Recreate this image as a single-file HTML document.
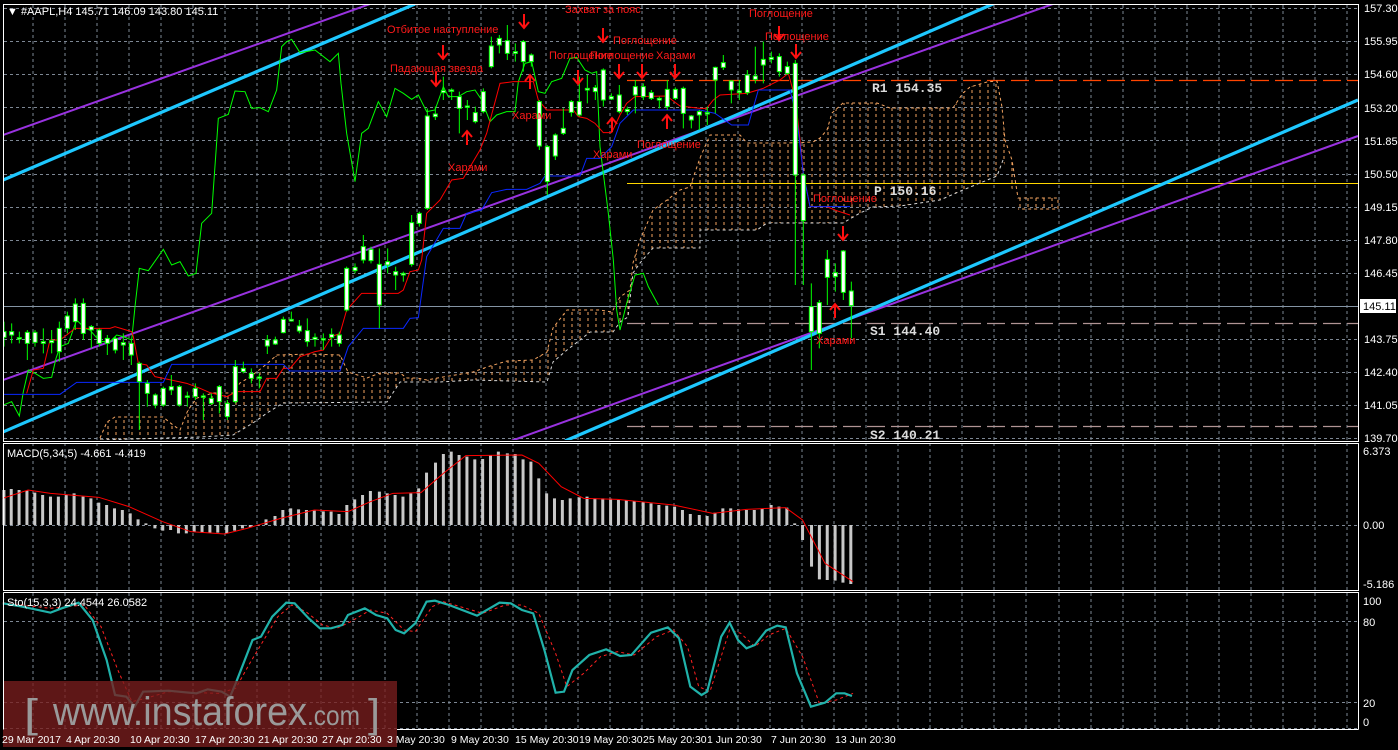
<!DOCTYPE html>
<html><head><meta charset="utf-8"><style>
html,body{margin:0;padding:0;background:#000;width:1398px;height:750px;overflow:hidden}
svg{display:block}
text{font-family:"Liberation Sans",sans-serif}
text.mono{font-family:"Liberation Mono",monospace;font-weight:bold}
</style></head><body>
<svg width="1398" height="750" viewBox="0 0 1398 750" xmlns="http://www.w3.org/2000/svg">
<defs>
<pattern id="hatch" width="8" height="6" patternUnits="userSpaceOnUse"><line x1="4" y1="0" x2="4" y2="3" stroke="#f4a460" stroke-width="1"/></pattern>
<clipPath id="mainclip"><rect x="4" y="5" width="1354" height="435"/></clipPath>
</defs>
<rect width="1398" height="750" fill="#000"/>
<g stroke="#7d8794" stroke-width="1" stroke-dasharray="3,3" fill="none">
<path d="M33 5V728M65 5V728M97 5V728M129 5V728M161 5V728M193 5V728M225 5V728M257 5V728M289 5V728M321 5V728M353 5V728M385 5V728M417 5V728M449 5V728M481 5V728M513 5V728M546 5V728M578 5V728M610 5V728M642 5V728M674 5V728M706 5V728M738 5V728M770 5V728M802 5V728M834 5V728M866 5V728M898 5V728M930 5V728M962 5V728M994 5V728M1026 5V728M1059 5V728M1091 5V728M1123 5V728M1155 5V728M1187 5V728M1219 5V728M1251 5V728M1283 5V728M1315 5V728M1347 5V728"/>
<path d="M4 8.5H1358M4 41.5H1358M4 74.5H1358M4 107.5H1358M4 140.5H1358M4 174.5H1358M4 207.5H1358M4 240.5H1358M4 273.5H1358M4 339.5H1358M4 372.5H1358M4 405.5H1358M4 438.5H1358M4 525.5H1358M4 621.5H1358M4 702.5H1358M4 728.5H1358"/>
</g>
<g clip-path="url(#mainclip)">
<line x1="627" y1="80.5" x2="1358" y2="80.5" stroke="#ff4500" stroke-width="1.3" stroke-dasharray="18,6"/>
<line x1="627" y1="183.5" x2="1358" y2="183.5" stroke="#ffd700" stroke-width="1"/>
<line x1="627" y1="323.5" x2="1358" y2="323.5" stroke="#b09494" stroke-width="1.3" stroke-dasharray="18,6"/>
<line x1="627" y1="426.5" x2="1358" y2="426.5" stroke="#b09494" stroke-width="1.3" stroke-dasharray="18,6"/>
<line x1="4" y1="306.5" x2="1358" y2="306.5" stroke="#8494a4" stroke-width="1"/>
<polygon fill="url(#hatch)" stroke="none" points="100,438 107,422 115,417 163,417 173,425 180,430 188,410 197,398 213,393 233,393 240,383 250,377 263,367 277,355 310,354 340,355 348,372 367,378 380,373 400,373 407,378 417,378 427,380 443,377 473,372 487,367 507,361 533,360 547,352 553,328 567,310 600,310 612,312 620,297 630,290 633,263 640,240 653,210 667,200 680,190 690,187 700,158 710,135 740,135 747,143 787,143 813,142 820,138 827,130 832,113 843,103 877,103 890,108 953,108 963,93 970,87 987,82 997,81 1002,107 1005,140 1012,160 1018,198 1058,198 1058,209 1018,209 1003,160 997,176 963,190 940,200 900,206 873,207 860,213 843,223 767,223 757,230 700,230 700,248 653,248 640,263 633,273 628,317 620,322 613,332 590,332 580,340 567,350 553,362 547,382 473,380 440,382 400,382 387,402 283,403 267,413 253,423 233,435 200,437 100,440"/>
<polyline fill="none" stroke="#f4a460" stroke-width="1" stroke-dasharray="3,3" points="100,438 107,422 115,417 163,417 173,425 180,430 188,410 197,398 213,393 233,393 240,383 250,377 263,367 277,355 310,354 340,355 348,372 367,378 380,373 400,373 407,378 417,378 427,380 443,377 473,372 487,367 507,361 533,360 547,352 553,328 567,310 600,310 612,312 620,297 630,290 633,263 640,240 653,210 667,200 680,190 690,187 700,158 710,135 740,135 747,143 787,143 813,142 820,138 827,130 832,113 843,103 877,103 890,108 953,108 963,93 970,87 987,82 997,81 1002,107 1005,140 1012,160 1018,198 1058,198 1058,209 1018,209"/>
<polyline fill="none" stroke="#d8d8d8" stroke-width="1" stroke-dasharray="3,3" points="1003,160 997,176 963,190 940,200 900,206 873,207 860,213 843,223 767,223 757,230 700,230 700,248 653,248 640,263 633,273 628,317 620,322 613,332 590,332 580,340 567,350 553,362 547,382 473,380 440,382 400,382 387,402 283,403 267,413 253,423 233,435 200,437 100,440"/>
<g stroke-linecap="butt">
<line x1="3" y1="135" x2="370" y2="4" stroke="#9932e0" stroke-width="2"/>
<line x1="3" y1="380" x2="1053" y2="4" stroke="#9932e0" stroke-width="2"/>
<line x1="511" y1="441" x2="1358" y2="136" stroke="#9932e0" stroke-width="2"/>
<line x1="3" y1="180" x2="415" y2="4" stroke="#1ec8ff" stroke-width="3.2"/>
<line x1="3" y1="432" x2="993" y2="4" stroke="#1ec8ff" stroke-width="3.2"/>
<line x1="565" y1="441" x2="1358" y2="100" stroke="#1ec8ff" stroke-width="3.2"/>
</g>
<g transform="scale(0.33333)" fill="none" stroke="#00ff00" stroke-width="1">
<polyline vector-effect="non-scaling-stroke" points="10,1215 35,1205 58,1248 70,1175 85,1110 105,1120 130,1135 155,1132 168,1075 180,1040 205,1030 230,960 255,985 270,990 300,1025 330,1025 350,1005 370,1010 395,1020 405,920 418,805 445,812 490,748 515,795 540,785 565,828 588,820 605,670 635,640 655,355 685,343 705,273 735,275 755,325 780,323 805,335 830,270 845,140 860,125 875,118 900,158 945,150 945,150 990,185 1015,160 1023,250 1040,400 1065,545 1085,400 1105,385 1135,305 1160,350 1185,265 1210,280 1235,298 1255,285 1280,335 1305,330 1330,260 1345,290 1375,290 1400,275 1425,270 1445,300 1470,365 1490,345 1520,335 1545,335 1555,245 1575,190 1595,185 1615,275 1635,280 1655,245 1685,235 1710,175 1730,172 1755,210 1775,220 1790,215 1800,440 1825,640 1840,780 1850,930 1860,990 1880,910 1905,825 1930,820 1945,860 1975,915"/>
<polyline vector-effect="non-scaling-stroke" stroke="#ff0000" points="80,1180 100,1110 130,1105 150,1020 180,1020 200,1005 225,985 330,985 345,980 395,995 400,1010 415,1090 440,1095 465,1130 490,1135 560,1150 600,1165 630,1178 680,1190 710,1175 780,1175 800,1135 830,1135 850,1105 870,1105 900,1070 945,1055 970,1050 995,1010 1020,1000 1040,930 1085,880 1195,880 1210,870 1230,815 1255,810 1265,780 1280,640 1320,600 1355,540 1390,535 1440,450 1460,400 1500,250 1540,245 1600,245 1615,300 1640,330 1720,330 1735,350 1760,355 1785,370 1810,398 1835,398 1860,345 1880,310 1905,290 2000,288 2040,318 2100,325 2120,325 2140,300 2160,285 2240,280 2290,265 2340,240 2365,220 2380,275 2390,330 2400,420 2410,520 2430,620 2480,620 2510,632 2550,645"/>
<polyline vector-effect="non-scaling-stroke" stroke="#0a28ff" points="10,1183 180,1183 230,1147 490,1147 515,1093 850,1093 870,1113 1020,1113 1045,1040 1090,985 1210,985 1230,955 1255,953 1280,770 1330,685 1380,685 1400,640 1445,630 1475,578 1520,568 1580,568 1620,550 1635,528 1740,528 1760,475 1800,475 1835,440 1860,370 1900,330 2100,330 2145,340 2195,375 2245,375 2275,270 2370,270 2390,350 2410,520 2430,620 2550,620"/>
</g>
<g transform="scale(0.33333)">
<path fill="none" stroke="#00ff00" stroke-width="1" vector-effect="non-scaling-stroke" d="M12 965V1040M35 970V1030M58 995V1030M82 990V1080M105 990V1040M130 985V1060M155 990V1060M178 965V1085M202 935V1000M226 895V990M250 895V1020M274 975V1045M298 985V1040M322 1005V1065M346 1010V1060M370 1000V1080M394 1020V1095M418 1085V1290M442 1140V1220M466 1180V1225M490 1160V1220M514 1125V1185M538 1155V1220M562 1175V1220M586 1150V1200M610 1180V1260M634 1180V1215M658 1155V1240M682 1200V1260M706 1080V1210M730 1085V1120M754 1105V1150M778 1120V1165M802 1005V1062M826 1010V1035M850 950V1000M874 935V965M898 960V1000M922 955V1040
M945 1000V1040M970 1000V1050M995 985V1040M1018 995V1040M1040 800V935M1065 790V820M1090 705V790M1113 740V790M1138 745V985M1163 745V820M1187 800V870M1210 815V845M1235 645V800M1258 635V680M1282 325V630M1306 320V360M1330 230V300M1355 265V300M1378 275V400M1402 300V360M1426 320V370M1450 265V340M1474 110V205M1498 105V160M1522 75V180M1546 130V185M1570 120V215M1594 160V200M1618 300V450M1642 435V585M1666 400V480M1690 325V405M1714 300V350M1738 230V350M1762 225V310M1786 255V300M1810 205V320M1834 280V300M1858 255V340M1882 320V345M1906 240V340M1930 250V300M1954 270V300M1978 290V325M2002 240V330M2026 262V300M2050 260V385M2074 345V385M2098 330V390
M2122 320V375M2146 200V340M2170 165V210M2194 240V310M2218 240V300M2242 210V285M2266 140V250M2290 125V250M2314 155V190M2338 160V230M2362 185V225M2386 180V855M2410 520V855M2434 850V1110M2458 900V1045M2482 750V915M2506 790V875M2530 750V900M2554 845V1015"/>
<g fill="#fff" stroke="#00ff00" stroke-width="1">
<rect vector-effect="non-scaling-stroke" x="6" y="995" width="12" height="17"/><rect vector-effect="non-scaling-stroke" x="29" y="995" width="12" height="10"/><rect vector-effect="non-scaling-stroke" x="52" y="1013" width="12" height="4"/><rect vector-effect="non-scaling-stroke" x="76" y="997" width="12" height="33"/><rect vector-effect="non-scaling-stroke" x="99" y="997" width="12" height="30"/><rect vector-effect="non-scaling-stroke" x="124" y="1025" width="12" height="5"/><rect vector-effect="non-scaling-stroke" x="149" y="1022" width="12" height="6"/><rect vector-effect="non-scaling-stroke" x="172" y="985" width="12" height="70"/><rect vector-effect="non-scaling-stroke" x="196" y="948" width="12" height="37"/><rect vector-effect="non-scaling-stroke" x="220" y="912" width="12" height="53"/><rect vector-effect="non-scaling-stroke" x="244" y="910" width="12" height="90"/><rect vector-effect="non-scaling-stroke" x="268" y="980" width="12" height="10"/><rect vector-effect="non-scaling-stroke" x="292" y="990" width="12" height="40"/><rect vector-effect="non-scaling-stroke" x="316" y="1015" width="12" height="15"/><rect vector-effect="non-scaling-stroke" x="340" y="1015" width="12" height="35"/><rect vector-effect="non-scaling-stroke" x="364" y="1028" width="12" height="7"/><rect vector-effect="non-scaling-stroke" x="388" y="1030" width="12" height="35"/><rect vector-effect="non-scaling-stroke" x="412" y="1090" width="12" height="55"/><rect vector-effect="non-scaling-stroke" x="436" y="1150" width="12" height="30"/><rect vector-effect="non-scaling-stroke" x="460" y="1185" width="12" height="30"/><rect vector-effect="non-scaling-stroke" x="484" y="1165" width="12" height="50"/><rect vector-effect="non-scaling-stroke" x="508" y="1160" width="12" height="10"/><rect vector-effect="non-scaling-stroke" x="532" y="1160" width="12" height="55"/><rect vector-effect="non-scaling-stroke" x="556" y="1188" width="12" height="4"/><rect vector-effect="non-scaling-stroke" x="580" y="1165" width="12" height="25"/><rect vector-effect="non-scaling-stroke" x="604" y="1188" width="12" height="4"/><rect vector-effect="non-scaling-stroke" x="628" y="1195" width="12" height="15"/><rect vector-effect="non-scaling-stroke" x="652" y="1160" width="12" height="45"/><rect vector-effect="non-scaling-stroke" x="676" y="1210" width="12" height="40"/><rect vector-effect="non-scaling-stroke" x="700" y="1100" width="12" height="105"/><rect vector-effect="non-scaling-stroke" x="724" y="1105" width="12" height="10"/><rect vector-effect="non-scaling-stroke" x="748" y="1120" width="12" height="15"/><rect vector-effect="non-scaling-stroke" x="772" y="1131" width="12" height="4"/><rect vector-effect="non-scaling-stroke" x="796" y="1020" width="12" height="18"/><rect vector-effect="non-scaling-stroke" x="820" y="1020" width="12" height="12"/><rect vector-effect="non-scaling-stroke" x="844" y="958" width="12" height="40"/><rect vector-effect="non-scaling-stroke" x="868" y="958" width="12" height="5"/><rect vector-effect="non-scaling-stroke" x="892" y="978" width="12" height="15"/><rect vector-effect="non-scaling-stroke" x="916" y="992" width="12" height="33"/>
<rect vector-effect="non-scaling-stroke" x="939" y="1012" width="12" height="6"/><rect vector-effect="non-scaling-stroke" x="964" y="1016" width="12" height="4"/><rect vector-effect="non-scaling-stroke" x="989" y="1003" width="12" height="9"/><rect vector-effect="non-scaling-stroke" x="1012" y="1005" width="12" height="25"/><rect vector-effect="non-scaling-stroke" x="1034" y="805" width="12" height="125"/><rect vector-effect="non-scaling-stroke" x="1059" y="802" width="12" height="10"/><rect vector-effect="non-scaling-stroke" x="1084" y="740" width="12" height="40"/><rect vector-effect="non-scaling-stroke" x="1107" y="748" width="12" height="34"/><rect vector-effect="non-scaling-stroke" x="1132" y="793" width="12" height="122"/><rect vector-effect="non-scaling-stroke" x="1157" y="785" width="12" height="10"/><rect vector-effect="non-scaling-stroke" x="1181" y="815" width="12" height="10"/><rect vector-effect="non-scaling-stroke" x="1204" y="820" width="12" height="5"/><rect vector-effect="non-scaling-stroke" x="1229" y="668" width="12" height="125"/><rect vector-effect="non-scaling-stroke" x="1252" y="640" width="12" height="30"/><rect vector-effect="non-scaling-stroke" x="1276" y="348" width="12" height="277"/><rect vector-effect="non-scaling-stroke" x="1300" y="342" width="12" height="8"/><rect vector-effect="non-scaling-stroke" x="1324" y="272" width="12" height="6"/><rect vector-effect="non-scaling-stroke" x="1349" y="270" width="12" height="4"/><rect vector-effect="non-scaling-stroke" x="1372" y="290" width="12" height="35"/><rect vector-effect="non-scaling-stroke" x="1396" y="318" width="12" height="4"/><rect vector-effect="non-scaling-stroke" x="1420" y="338" width="12" height="27"/><rect vector-effect="non-scaling-stroke" x="1444" y="275" width="12" height="60"/><rect vector-effect="non-scaling-stroke" x="1468" y="138" width="12" height="62"/><rect vector-effect="non-scaling-stroke" x="1492" y="115" width="12" height="20"/><rect vector-effect="non-scaling-stroke" x="1516" y="122" width="12" height="38"/><rect vector-effect="non-scaling-stroke" x="1540" y="155" width="12" height="5"/><rect vector-effect="non-scaling-stroke" x="1564" y="125" width="12" height="60"/><rect vector-effect="non-scaling-stroke" x="1588" y="165" width="12" height="20"/><rect vector-effect="non-scaling-stroke" x="1612" y="305" width="12" height="133"/><rect vector-effect="non-scaling-stroke" x="1636" y="440" width="12" height="105"/><rect vector-effect="non-scaling-stroke" x="1660" y="405" width="12" height="63"/><rect vector-effect="non-scaling-stroke" x="1684" y="385" width="12" height="15"/><rect vector-effect="non-scaling-stroke" x="1708" y="305" width="12" height="32"/><rect vector-effect="non-scaling-stroke" x="1732" y="305" width="12" height="40"/><rect vector-effect="non-scaling-stroke" x="1756" y="265" width="12" height="5"/><rect vector-effect="non-scaling-stroke" x="1780" y="263" width="12" height="12"/><rect vector-effect="non-scaling-stroke" x="1804" y="210" width="12" height="90"/><rect vector-effect="non-scaling-stroke" x="1828" y="290" width="12" height="7"/><rect vector-effect="non-scaling-stroke" x="1852" y="285" width="12" height="50"/><rect vector-effect="non-scaling-stroke" x="1876" y="328" width="12" height="7"/><rect vector-effect="non-scaling-stroke" x="1900" y="260" width="12" height="25"/><rect vector-effect="non-scaling-stroke" x="1924" y="260" width="12" height="30"/><rect vector-effect="non-scaling-stroke" x="1948" y="278" width="12" height="17"/><rect vector-effect="non-scaling-stroke" x="1972" y="295" width="12" height="5"/><rect vector-effect="non-scaling-stroke" x="1996" y="268" width="12" height="52"/><rect vector-effect="non-scaling-stroke" x="2020" y="268" width="12" height="27"/><rect vector-effect="non-scaling-stroke" x="2044" y="265" width="12" height="75"/><rect vector-effect="non-scaling-stroke" x="2068" y="348" width="12" height="12"/><rect vector-effect="non-scaling-stroke" x="2092" y="335" width="12" height="10"/>
<rect vector-effect="non-scaling-stroke" x="2116" y="338" width="12" height="4"/><rect vector-effect="non-scaling-stroke" x="2140" y="202" width="12" height="38"/><rect vector-effect="non-scaling-stroke" x="2164" y="188" width="12" height="14"/><rect vector-effect="non-scaling-stroke" x="2188" y="243" width="12" height="27"/><rect vector-effect="non-scaling-stroke" x="2212" y="273" width="12" height="5"/><rect vector-effect="non-scaling-stroke" x="2236" y="225" width="12" height="53"/><rect vector-effect="non-scaling-stroke" x="2260" y="228" width="12" height="10"/><rect vector-effect="non-scaling-stroke" x="2284" y="178" width="12" height="17"/><rect vector-effect="non-scaling-stroke" x="2308" y="172" width="12" height="6"/><rect vector-effect="non-scaling-stroke" x="2332" y="170" width="12" height="45"/><rect vector-effect="non-scaling-stroke" x="2356" y="200" width="12" height="20"/><rect vector-effect="non-scaling-stroke" x="2380" y="190" width="12" height="335"/><rect vector-effect="non-scaling-stroke" x="2404" y="525" width="12" height="137"/><rect vector-effect="non-scaling-stroke" x="2428" y="920" width="12" height="75"/><rect vector-effect="non-scaling-stroke" x="2452" y="908" width="12" height="92"/><rect vector-effect="non-scaling-stroke" x="2476" y="778" width="12" height="54"/><rect vector-effect="non-scaling-stroke" x="2500" y="818" width="12" height="12"/><rect vector-effect="non-scaling-stroke" x="2524" y="753" width="12" height="124"/><rect vector-effect="non-scaling-stroke" x="2548" y="873" width="12" height="44"/>
</g>
</g>
<g stroke="#ff1010" stroke-width="2" fill="none">
<path d="M524 14V28M519 22L524 28L529 22"/>
<path d="M443 45V59M438 53L443 59L448 53"/>
<path d="M436 72V86M431 80L436 86L441 80"/>
<path d="M603 28V42M598 36L603 42L608 36"/>
<path d="M578 70V84M573 78L578 84L583 78"/>
<path d="M619 64V78M614 72L619 78L624 72"/>
<path d="M642 64V78M637 72L642 78L647 72"/>
<path d="M675 64V78M670 72L675 78L680 72"/>
<path d="M779 26V40M774 34L779 40L784 34"/>
<path d="M796 44V58M791 52L796 58L801 52"/>
<path d="M843 226V240M838 234L843 240L848 234"/>
<path d="M467 145V131M462 137L467 131L472 137"/>
<path d="M530 89V75M525 81L530 75L535 81"/>
<path d="M612 132V118M607 124L612 118L617 124"/>
<path d="M667 129V115M662 121L667 115L672 121"/>
<path d="M835 318V304M830 310L835 304L840 310"/>
</g>
<g fill="#ff1a1a" font-size="11">
<text x="387" y="33">Отбитое наступление</text>
<text x="390" y="72">Падающая звезда</text>
<text x="565" y="13">Захват за пояс</text>
<text x="613" y="44">Поглощение</text>
<text x="549" y="59">Поглощение</text>
<text x="590" y="59">Поглощение</text>
<text x="656" y="59">Харами</text>
<text x="512" y="119">Харами</text>
<text x="448" y="171">Харами</text>
<text x="593" y="158">Харами</text>
<text x="637" y="148">Поглощение</text>
<text x="749" y="17">Поглощение</text>
<text x="765" y="40">Поглощение</text>
<text x="813" y="202">Поглощение</text>
<text x="816" y="344">Харами</text>
</g>
</g>
<g font-size="13" fill="#dcdcdc">
<text class="mono" x="872" y="92">R1  154.35</text>
<text class="mono" x="874" y="195">P  150.16</text>
<text class="mono" x="870" y="335">S1  144.40</text>
<text class="mono" x="870" y="439">S2  140.21</text>
</g>
<svg x="0" y="440" width="880" height="300" viewBox="0 0 1568 900" preserveAspectRatio="none">
<path fill="none" stroke="#c8c8c8" stroke-width="3" vector-effect="non-scaling-stroke" d="M7 255V150M20 255V147M34 255V150M48 255V152M62 255V158M76 255V165M90 255V170M104 255V170M118 255V165M132 255V160M148 255V170M162 255V175M176 255V188M190 255V195M204 255V205M218 255V210M232 255V220M246 255V238M260 255V250M276 255V265M290 255V272M304 255V270M318 255V280M332 255V280M346 255V275M360 255V278M374 255V278M388 255V278M404 255V280M418 255V272M432 255V265M446 255V262M460 255V258M474 255V238M490 255V228M504 255V210M518 255V205M532 255V208M546 255V210M560 255V212M576 255V214M590 255V215M604 255V222M618 255V195M632 255V178M646 255V165M660 255V153M676 255V155M690 255V160M704 255V165M718 255V170M732 255V160M746 255V145M760 255V98M776 255V68M790 255V42M804 255V35M818 255V45M832 255V50M846 255V58M860 255V57M874 255V45M888 255V35M904 255V40M918 255V42M932 255V58M946 255V65M960 255V115M974 255V160M988 255V175M1002 255V180M1016 255V175M1032 255V172M1046 255V170M1060 255V175M1074 255V175M1088 255V176M1102 255V180M1116 255V180M1130 255V183M1146 255V186M1160 255V190M1174 255V195M1188 255V197M1202 255V200M1216 255V210M1230 255V222M1246 255V225M1260 255V228M1274 255V218M1288 255V205M1302 255V205M1316 255V208M1330 255V210M1344 255V210M1358 255V206M1374 255V195M1388 255V200M1402 255V203M1416 255V250M1430 255V300M1446 255V380M1460 255V418M1474 255V420M1488 255V422M1502 255V428M1516 255V432"/>
<polyline fill="none" stroke="#ff0000" stroke-width="1" vector-effect="non-scaling-stroke" points="5,175 50,150 90,160 176,172 230,200 290,245 340,275 400,282 440,265 500,235 560,210 620,215 660,185 700,160 750,158 790,100 830,47 930,45 960,70 1000,140 1040,175 1100,178 1200,195 1270,220 1330,208 1400,203 1430,240 1470,370 1520,425"/>
<polyline fill="none" stroke="#ff2020" stroke-width="1" stroke-dasharray="3,3" vector-effect="non-scaling-stroke" points="5,488 40,495 90,505 120,500 150,495 180,560 210,690 235,785 260,775 300,755 350,758 390,760 420,745 445,670 470,600 495,530 520,495 545,515 575,555 600,565 625,545 660,510 690,520 720,570 740,575 770,500 790,485 820,500 860,520 900,495 930,495 960,520 990,640 1010,740 1040,700 1070,650 1100,635 1130,645 1170,590 1200,570 1225,620 1245,740 1265,755 1300,570 1320,580 1345,620 1370,585 1400,565 1430,650 1460,790 1490,780 1520,760"/>
<polyline fill="none" stroke="#20b2aa" stroke-width="2.2" vector-effect="non-scaling-stroke" points="5,490 40,500 90,518 110,505 140,488 165,540 190,660 205,765 225,770 240,800 255,755 300,752 350,760 370,748 395,755 410,770 420,730 435,665 450,600 465,590 485,530 510,488 525,490 550,535 570,565 590,565 610,555 620,525 650,505 670,525 690,535 705,570 720,580 740,550 760,485 775,482 800,495 850,527 890,488 910,490 930,510 950,520 970,630 990,758 1005,755 1020,690 1050,645 1080,628 1105,648 1125,645 1160,578 1190,562 1210,595 1230,740 1250,765 1260,755 1285,590 1300,548 1315,600 1330,625 1345,615 1365,572 1385,557 1400,562 1420,700 1445,800 1470,788 1490,760 1505,760 1518,768"/>
</svg>
<rect x="3" y="681" width="394" height="66" fill="rgb(120,30,30)" fill-opacity="0.78"/>
<g fill="#9a9a9a">
<text x="24" y="727" font-size="40" textLength="14" lengthAdjust="spacingAndGlyphs">[</text>
<text x="53" y="725" font-size="40" textLength="254" lengthAdjust="spacingAndGlyphs">www.instaforex</text>
<text x="307" y="725" font-size="28" textLength="53" lengthAdjust="spacingAndGlyphs">.com</text>
<text x="368" y="727" font-size="40" textLength="12" lengthAdjust="spacingAndGlyphs">]</text>
</g>
<g stroke="#fff" stroke-width="1" fill="none">
<path d="M3.5 4.5H1358.5V441.5H3.5Z"/>
<path d="M3.5 443.5H1358.5V590.5H3.5Z"/>
<path d="M3.5 592.5H1358.5V729.5"/>
<path d="M3.5 592.5V729.5"/>
<path d="M397 729.5H1358.5"/>
</g>
<g fill="#fff" font-size="11">
<text x="7" y="15">▼ #AAPL,H4  145.71 146.09 143.80 145.11</text>
<text x="7" y="457">MACD(5,34,5) -4.661 -4.419</text>
<text x="7" y="606">Sto(15,3,3) 24.4544 26.0582</text>
<text x="1364" y="12">157.30</text>
<text x="1364" y="45">155.95</text>
<text x="1364" y="78">154.60</text>
<text x="1364" y="112">153.20</text>
<text x="1364" y="145">151.85</text>
<text x="1364" y="178">150.50</text>
<text x="1364" y="211">149.15</text>
<text x="1364" y="244">147.80</text>
<text x="1364" y="277">146.45</text>
<text x="1364" y="343">143.75</text>
<text x="1364" y="376">142.40</text>
<text x="1364" y="409">141.05</text>
<text x="1364" y="442">139.70</text>
<text x="1363" y="455">6.373</text>
<text x="1363" y="529">0.00</text>
<text x="1363" y="588">-5.186</text>
<text x="1363" y="605">100</text>
<text x="1363" y="626">80</text>
<text x="1363" y="707">20</text>
<text x="1363" y="726">0</text>
</g>
<g fill="#fff" font-size="10.5">
<text x="2" y="743">29 Mar 2017</text>
<text x="66" y="743">4 Apr 20:30</text>
<text x="130" y="743">10 Apr 20:30</text>
<text x="195" y="743">17 Apr 20:30</text>
<text x="258" y="743">21 Apr 20:30</text>
<text x="322" y="743">27 Apr 20:30</text>
<text x="387" y="743">3 May 20:30</text>
<text x="451" y="743">9 May 20:30</text>
<text x="515" y="743">15 May 20:30</text>
<text x="579" y="743">19 May 20:30</text>
<text x="643" y="743">25 May 20:30</text>
<text x="707" y="743">1 Jun 20:30</text>
<text x="771" y="743">7 Jun 20:30</text>
<text x="835" y="743">13 Jun 20:30</text>
</g>
<rect x="1360" y="299" width="36" height="14" fill="#fff"/>
<text x="1363" y="310" font-size="11" fill="#000">145.11</text>
</svg>
</body></html>
